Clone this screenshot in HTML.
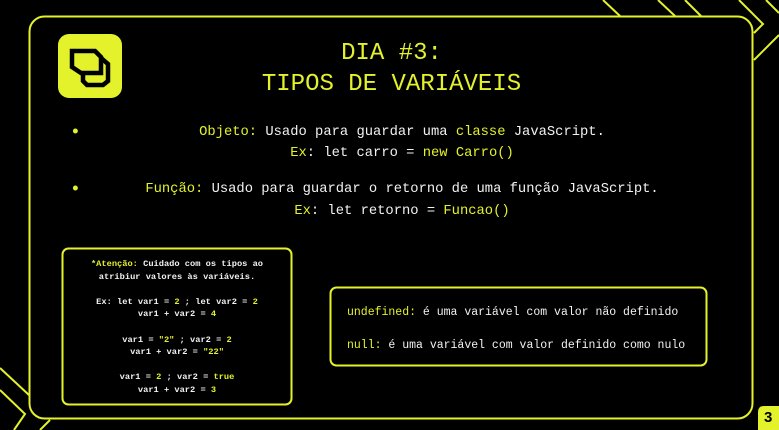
<!DOCTYPE html>
<html><head><meta charset="utf-8"><style>
html,body{margin:0;padding:0;background:#000;width:779px;height:430px;overflow:hidden;position:relative;font-family:"Liberation Mono",monospace;}
.a{position:absolute}
.y{color:#e3f22a}
.w{color:#f2f2f2}
.c{text-align:center;white-space:pre}
</style></head><body>
<svg class="a" style="left:0;top:0" width="779" height="430">
<g stroke="#e3f22a" stroke-width="2" fill="none">
<line x1="603" y1="0" x2="620" y2="16"/>
<line x1="658" y1="0" x2="675" y2="16"/>
<line x1="685" y1="0" x2="701" y2="16"/>
<polyline points="739,0 763,24 754,33"/>
<line x1="779" y1="35" x2="754" y2="60"/>
<line x1="766" y1="0" x2="779" y2="13"/>
<line x1="0" y1="368" x2="29" y2="395"/>
<polyline points="0,390 25,414 14,430"/>
<line x1="40" y1="430" x2="50" y2="420"/>
<rect x="29.5" y="16.5" width="723" height="402" rx="15"/>
<rect x="62.5" y="248.5" width="229" height="156" rx="6"/>
<rect x="330.5" y="287.5" width="376" height="78" rx="6"/>
</g>
<rect x="58" y="34" width="64" height="64" rx="11" fill="#e3f22a"/>
<g fill="none" stroke="#000" stroke-width="4.5">
<path d="M72 51 H95 L101 57 V73 H81 L72 67 Z"/>
<path d="M83 73 V81 L87 85 H103 L108 81 V64 L101 58"/>
</g>
<path d="M758 430 V412 Q758 406 764 406 H779 V430Z" fill="#e3f22a"/>
</svg>
<div class="a c" style="left:764px;top:409px;font:bold 15px 'Liberation Sans',sans-serif;color:#000">3</div>
<div class="a c y" style="left:0;width:783px;top:38px;font-size:24px;line-height:31px">DIA #3:
TIPOS DE VARIÁVEIS</div>
<div class="a y" style="left:70px;top:123px;font-size:18px">•</div>
<div class="a y" style="left:70px;top:180px;font-size:18px">•</div>
<div class="a c w" style="left:0;width:804px;top:122px;font-size:13.8px;line-height:21px"><span class="y">Objeto:</span> Usado para guardar uma <span class="y">classe</span> JavaScript.
<span class="y">Ex</span>: let carro = <span class="y">new Carro()</span></div>
<div class="a c w" style="left:0;width:804px;top:179px;font-size:13.8px;line-height:22px"><span class="y">Função:</span> Usado para guardar o retorno de uma função JavaScript.
<span class="y">Ex</span>: let retorno = <span class="y">Funcao()</span></div>
<div class="a c w" style="left:62px;width:230px;top:258px;font-size:8.7px;line-height:12.6px;font-weight:bold"><span class="y">*Atenção:</span> Cuidado com os tipos ao
atribiur valores às variáveis.

Ex: let var1 = <span class="y">2</span> ; let var2 = <span class="y">2</span>
var1 + var2 = <span class="y">4</span>

var1 = <span class="y">"2"</span> ; var2 = <span class="y">2</span>
var1 + var2 = <span class="y">"22"</span>

var1 = <span class="y">2</span> ; var2 = <span class="y">true</span>
var1 + var2 = <span class="y">3</span></div>
<div class="a w" style="left:347px;top:296px;font-size:11.5px;white-space:pre;line-height:33px"><span class="y">undefined:</span> é uma variável com valor não definido
<span class="y">null:</span> é uma variável com valor definido como nulo</div>
</body></html>
